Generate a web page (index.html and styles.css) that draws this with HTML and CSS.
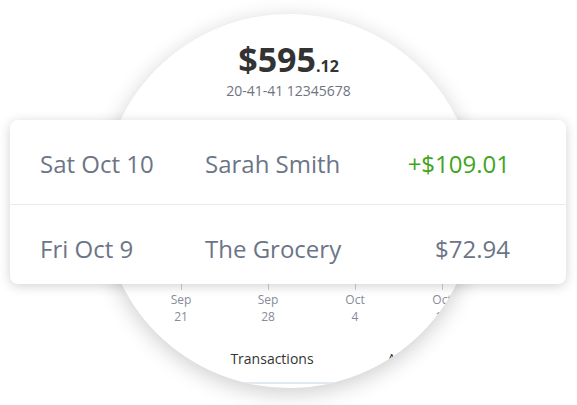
FILE: index.html
```html
<!DOCTYPE html>
<html lang="en">
	<head>
		<meta charset="UTF-8" />
		<meta name="viewport" content="width=device-width, initial-scale=1.0" />
		<title>Account</title>
		<link rel="stylesheet" href="styles.css">
	</head>
	<body>
		<div class="stage">
			<div class="lens">
				<div class="balance">
					<span class="balance-main">$595</span><span class="balance-cents">.12</span>
				</div>
				<div class="account-number">20-41-41 12345678</div>

				<div class="chart"></div>

				<div class="axis">
					<div class="axis-item"><span class="tick"></span>Sep<br />21</div>
					<div class="axis-item"><span class="tick"></span>Sep<br />28</div>
					<div class="axis-item"><span class="tick"></span>Oct<br />4</div>
					<div class="axis-item"><span class="tick"></span>Oct<br />11</div>
				</div>

				<div class="tabs">
					<div class="tab">Transactions</div>
					<div class="tab">Accounts</div>
				</div>
			</div>

			<div class="card">
				<div class="row">
					<span class="date">Sat Oct 10</span>
					<span class="payee">Sarah Smith</span>
					<span class="amount credit">+$109.01</span>
				</div>
				<div class="row">
					<span class="date">Fri Oct 9</span>
					<span class="payee">The Grocery</span>
					<span class="amount">$72.94</span>
				</div>
			</div>
		</div>
	</body>
</html>
```

FILE: styles.css
```css
body {
	margin: 0;
	background-color: #fff;
	font-family: "Open Sans", "Liberation Sans", sans-serif;
}

.stage {
	display: grid;
	width: 577px;
	height: 405px;
	overflow: hidden;
}

/* big round "magnifier" */
.lens {
	grid-area: 1 / 1;
	justify-self: center;
	align-self: start;
	margin-top: 14px;
	width: 374px;
	height: 374px;
	border-radius: 50%;
	overflow: hidden;
	background-color: #fff;
	box-shadow: 0 5px 22px rgba(0, 0, 0, 0.2);
	display: flex;
	flex-direction: column;
}

.balance {
	margin-top: 28px;
	text-align: center;
	color: #333;
	font-weight: 700;
	line-height: 1;
}

.balance-main {
	font-size: 34px;
}

.balance-cents {
	font-size: 16px;
}

.account-number {
	margin-top: 8px;
	text-align: center;
	font-size: 14px;
	line-height: 1;
	color: #6f7380;
}

.chart {
	height: 185px;
	flex-shrink: 0;
}

.axis {
	display: flex;
	padding-left: 36px;
}

.axis-item {
	flex: 0 0 87px;
	display: flex;
	flex-direction: column;
	align-items: center;
	text-align: center;
	font-size: 12px;
	line-height: 17px;
	color: #868c99;
}

.tick {
	width: 1px;
	height: 7px;
	margin-bottom: 1px;
	background-color: #c9ccd2;
}

.tabs {
	display: flex;
	margin-top: 24px;
	padding-left: 98px;
	padding-bottom: 13px;
	border-bottom: 2px solid #e1e8ef;
}

.tab {
	flex: 0 0 145px;
	text-align: center;
	font-size: 14px;
	line-height: 20px;
	color: #333;
}

/* transactions card laid over the lens */
.card {
	grid-area: 1 / 1;
	position: relative;
	align-self: start;
	justify-self: start;
	margin: 120px 0 0 10px;
	width: 556px;
	background-color: #fff;
	border-radius: 8px;
	box-shadow: 0 2px 12px rgba(0, 0, 0, 0.18);
}

.row {
	display: grid;
	grid-template-columns: 165px 1fr auto;
	box-sizing: border-box;
	height: 84px;
	padding: 27px 56px 0 30px;
	font-size: 24px;
	line-height: 33px;
	color: #6c7587;
}

.row + .row {
	height: 80px;
	border-top: 1px solid #e6ebf1;
}

.amount.credit {
	color: #3fa51c;
}
```
